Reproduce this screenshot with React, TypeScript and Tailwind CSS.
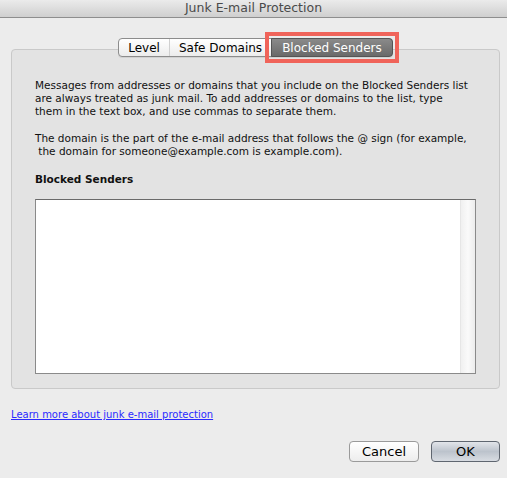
import React from "react";

const font = { fontFamily: '"DejaVu Sans", "Liberation Sans", sans-serif' };

export default function App() {
  return (
    <div className="w-[507px] h-[478px] bg-[#ececec] flex flex-col overflow-hidden" style={font}>
      {/* title bar */}
      <div className="h-[18px] shrink-0 flex items-center justify-center border-b border-[#8e8e8e] bg-gradient-to-b from-[#ebebeb] to-[#cfcfcf] text-[12.5px] text-[#4a4a4a] leading-none">
        Junk E-mail Protection
      </div>

      {/* tabs */}
      <div className="relative z-10 mt-[20px] ml-[11px] w-[489px] flex justify-center">
        <div className="flex h-[19px] rounded-[4px] border border-[#8c8c8c] bg-gradient-to-b from-white to-[#ececec] text-[12px] text-black leading-none shadow-[0_1px_0_rgba(0,0,0,0.08)]">
          <div className="flex items-center px-[9px] border-r border-[#d0d0d0]">Level</div>
          <div className="flex items-center px-[9px]">Safe Domains</div>
          <div className="relative flex items-center px-[10px] -my-px -mr-px rounded-r-[4px] border border-[#555] bg-gradient-to-b from-[#8a8a8a] to-[#6a6a6a] text-white">
            Blocked Senders
            <div className="absolute -left-[7px] -right-[7px] -top-[7px] -bottom-[7px] border-[4px] border-[#f0645a]" />
          </div>
        </div>
      </div>

      {/* group box */}
      <div className="-mt-[8px] ml-[11px] w-[489px] h-[340px] rounded-[4px] border border-[#c9c9c9] bg-[#e3e3e3] pt-[29px] px-[23px] text-[10.5px] leading-[13px] text-[#111] whitespace-nowrap">
        <p>
          Messages from addresses or domains that you include on the Blocked Senders list
          <br />
          are always treated as junk mail. To add addresses or domains to the list, type
          <br />
          them in the text box, and use commas to separate them.
        </p>
        <p className="mt-[14px]">
          The domain is the part of the e-mail address that follows the @ sign (for example,
          <br />
          &nbsp;the domain for someone@example.com is example.com).
        </p>
        <p className="mt-[15px] font-bold">Blocked Senders</p>
        <div className="mt-[13px] w-[441px] h-[175px] flex bg-white border border-[#8a8a8a] border-t-[#6a6a6a]">
          <div className="flex-1" />
          <div className="w-[15px] border-l border-[#e6e6e6] bg-gradient-to-r from-[#f0f0f0] via-[#fafafa] to-[#ececec]" />
        </div>
      </div>

      {/* link */}
      <div className="mt-[19px] ml-[11px] text-[10px] leading-[13px]">
        <a href="#" className="text-[#2a2aff] underline">Learn more about junk e-mail protection</a>
      </div>

      {/* buttons */}
      <div className="mt-[20px] mr-[7px] flex justify-end gap-[12px]">
        <button className="w-[70px] h-[21px] rounded-[4px] border border-[#9a9a9a] bg-gradient-to-b from-white to-[#ededed] text-[13px] text-black leading-none">
          Cancel
        </button>
        <button className="w-[69px] h-[21px] rounded-[4px] border border-[#5f6670] bg-gradient-to-b from-[#e2e5ea] via-[#bcc3cc] to-[#d8dce2] text-[13px] text-black leading-none">
          OK
        </button>
      </div>
    </div>
  );
}
